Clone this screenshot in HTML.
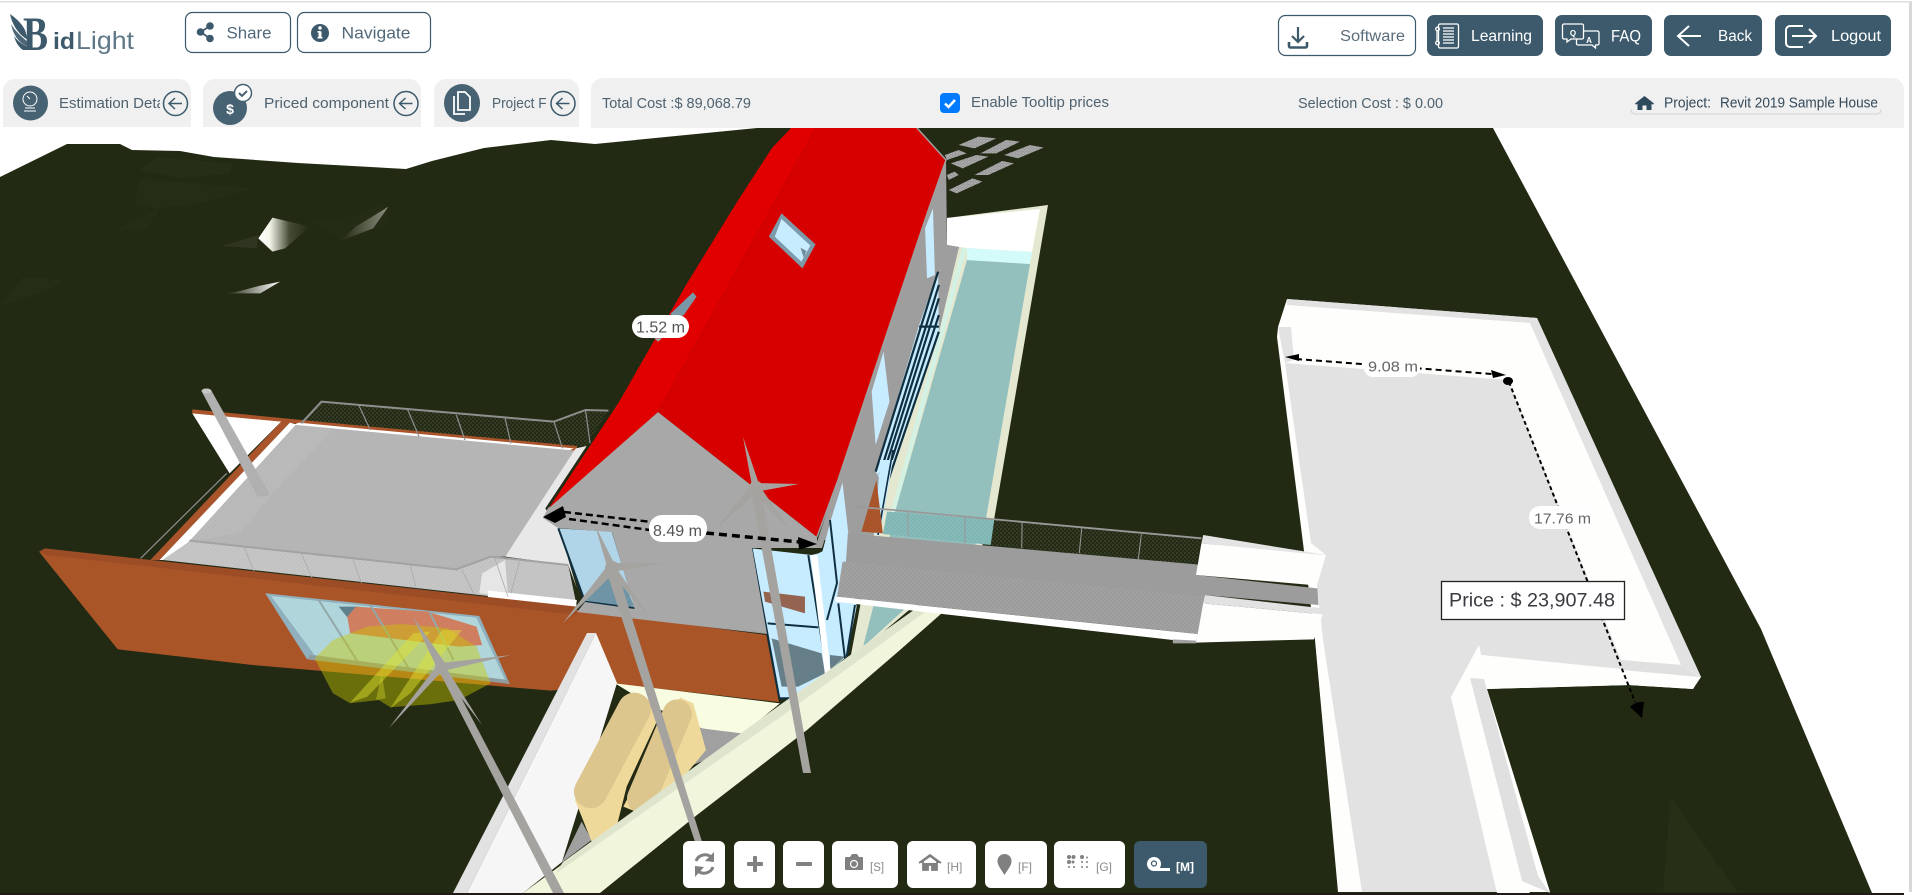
<!DOCTYPE html>
<html><head><meta charset="utf-8"><title>BidLight</title>
<style>
html,body{margin:0;padding:0;background:#fff;overflow:hidden}
svg{display:block;position:absolute;left:0;top:0}
text{font-family:"Liberation Sans",sans-serif}
</style></head><body>
<svg width="1912" height="895" viewBox="0 0 1912 895" xmlns="http://www.w3.org/2000/svg">
<defs>
<clipPath id="view"><rect x="0" y="128" width="1904" height="765"/></clipPath>
<clipPath id="t1"><rect x="50" y="85" width="110" height="35"/></clipPath>
<clipPath id="t3"><rect x="485" y="85" width="62" height="35"/></clipPath>
<pattern id="dd5" width="4" height="4" patternUnits="userSpaceOnUse" patternTransform="scale(1.74216,3.0003)"><rect width="4" height="4" fill="#232a14"/><circle cx="1" cy="1" r=".55" fill="#7d8074"/><circle cx="3" cy="3" r=".55" fill="#666a5c"/></pattern>
<pattern id="dl5" width="4" height="4" patternUnits="userSpaceOnUse" patternTransform="scale(1.74216,3.0003)"><rect width="4" height="4" fill="#b8b8b8"/><circle cx="1" cy="1" r=".55" fill="#c8c8c8"/><circle cx="3" cy="3" r=".55" fill="#c4c4c4"/></pattern>
<pattern id="df5" width="4" height="4" patternUnits="userSpaceOnUse" patternTransform="scale(1.74216,3.0003)"><rect width="4" height="4" fill="#c2c2c2"/><circle cx="1" cy="1" r=".55" fill="#d4d4d4"/><circle cx="3" cy="3" r=".55" fill="#d0d0d0"/></pattern>
<pattern id="dd8" width="4" height="4" patternUnits="userSpaceOnUse" patternTransform="scale(2.80034,3.0003)"><rect width="4" height="4" fill="#232a14"/><circle cx="1" cy="1" r=".55" fill="#7d8074"/><circle cx="3" cy="3" r=".55" fill="#666a5c"/></pattern>
<pattern id="dg8" width="4" height="4" patternUnits="userSpaceOnUse" patternTransform="scale(2.80034,3.0003)"><rect width="4" height="4" fill="#9c9c9c"/><circle cx="1" cy="1" r=".55" fill="#b8b8b8"/><circle cx="3" cy="3" r=".55" fill="#b2b2b2"/></pattern>
<pattern id="dp8" width="4" height="4" patternUnits="userSpaceOnUse" patternTransform="scale(2.80034,3.0003)"><rect width="4" height="4" fill="#7fb5b3"/><circle cx="1" cy="1" r=".55" fill="#a4cdca"/><circle cx="3" cy="3" r=".55" fill="#a4cdca"/></pattern>
<pattern id="ds6" width="3" height="3" patternUnits="userSpaceOnUse" patternTransform="scale(2.52908,3.0003)"><rect width="3" height="3" fill="#979797"/><circle cx="1" cy="1" r=".65" fill="#cfcfcf"/><circle cx="2.500" cy="2.300" r=".45" fill="#bdbdbd"/></pattern>
<linearGradient id="spec" x1="0" y1="0" x2="1" y2="0"><stop offset="0" stop-color="#fff"/><stop offset=".22" stop-color="#f4f5ea"/><stop offset=".6" stop-color="#454b35"/><stop offset="1" stop-color="#232a14"/></linearGradient>
<linearGradient id="spec2" x1="1" y1="0" x2="0" y2="0"><stop offset="0" stop-color="#8a8d7e"/><stop offset="1" stop-color="#232a14"/></linearGradient>
<linearGradient id="spec3" x1="1" y1="0" x2="0" y2="0"><stop offset="0" stop-color="#fff"/><stop offset="1" stop-color="#232a14"/></linearGradient>
</defs>
<rect width="1912" height="895" fill="#fff"/>
<rect x="0" y="1" width="1912" height="1.5" fill="#dedede"/>

<g clip-path="url(#view)">
<!-- terrain -->
<polygon fill="#232a14" points="0,177 67,144 120,144 132,150 180,151 214,157 298,163 406,169 432,161 484,148 551,140 595,144 757,128 1493,128 1761,629 1872,893 0,893"/>
<g transform="translate(0,120) scale(.3827,.3333)">
<polygon fill="#272e17" points="365,150 410,112 610,130 600,160 470,175"/>
<polygon fill="#262d16" points="370,175 660,205 520,250 420,265 300,330 385,325 415,270 350,250"/>
<polygon fill="#262d16" points="0,560 60,470 160,480 130,510"/>
<polygon fill="#252c15" points="810,300 920,290 1010,250 1015,310 900,365"/>
<polygon fill="url(#spec)" points="675,355 712,293 810,320 745,385 712,395"/>
<polygon fill="url(#spec2)" points="890,362 975,325 1015,260 930,320"/>
<polygon fill="url(#spec3)" points="590,520 680,520 732,485 680,497 620,515"/>
<polygon fill="#2f3520" points="580,378 675,345 670,385"/>
</g>
<g transform="translate(1300,120) scale(.3903,.4943)"><polygon fill="#272f16" points="950,1370 1120,1562 930,1562"/></g>

<!-- solar panels -->
<g transform="translate(500,125) scale(.3954,.3333)" fill="url(#ds6)">
<polygon points="1160,60 1210,35 1255,40 1200,70"/><polygon points="1215,85 1280,45 1315,50 1255,85"/><polygon points="1275,90 1340,60 1375,68 1310,100"/><polygon points="1125,90 1160,75 1180,85 1130,105"/><polygon points="1140,115 1205,90 1235,95 1170,130"/><polygon points="1200,150 1270,108 1300,115 1235,150"/><polygon points="1135,195 1195,160 1220,170 1155,205"/><polygon points="1130,150 1150,140 1160,150 1135,165"/>
</g>

<!-- pool -->
<polygon fill="#e4e8d0" points="947,218 1048,205 994,520 980,550 850,660 880,500 959,247 947,245"/>
<polygon fill="#fff" points="947,218 1040,209 1032,252 967,248 959,247 947,245"/>
<polygon fill="#93bfbd" points="967,260 1030,264 984,530 975,545 863,647 880,580 895,512"/>
<polygon fill="#d2fbfa" points="967,248 1032,252 1030,264 967,260"/>
<polygon fill="#d4f2e4" points="962,248 967,248 895,512 891,512"/>

<!-- left deck -->
<g transform="translate(0,380) scale(.574,.3333)">
<polygon fill="#a9542a" points="335,88 1005,200 1005,215 335,100"/>
<polygon fill="#fff" points="335,100 490,125 400,280"/>
<polygon fill="url(#dd5)" points="560,65 965,125 1020,90 1060,92 1020,200 525,130"/>
<polygon fill="#a9542a" points="525,120 1005,198 1005,215 525,138"/>
<polygon fill="#fff" points="520,128 1000,205 985,216 510,136"/>
<polygon fill="#a9542a" points="490,125 505,128 278,540 262,540"/>
<polygon fill="#fff" points="505,128 520,135 300,540 278,540"/>
<polygon fill="#b5b5b5" points="515,135 1003,212 880,530 855,530 795,568 330,482 300,540"/>
<polygon fill="url(#dl5)" points="515,135 580,145 470,350 420,455 340,485 300,540"/>
<polygon fill="#e8e8e8" points="1003,205 1022,198 950,385 975,450 1005,625 990,555 880,530"/>
<polygon fill="url(#df5)" points="283,540 330,484 795,568 855,530 990,555 1005,680 835,645"/>
<polygon fill="#e6e6e6" points="840,580 880,540 885,650 835,640"/>
<polygon fill="#fff" points="850,632 1005,660 1003,682 850,652"/>
<g fill="none" stroke="#8f8f8f">
<polyline stroke-width="2" vector-effect="non-scaling-stroke" points="525,130 560,65 965,125 1020,90 1060,92"/>
<path stroke-width="1.200" vector-effect="non-scaling-stroke" d="M625,75L645,150M710,88L730,170M795,105L810,180M880,115L890,190M965,125L980,205M1020,90L1028,190M245,535L395,280"/>
<polyline stroke-width="2" vector-effect="non-scaling-stroke" points="330,482 795,568 855,530 990,555" stroke="#a2a2a2"/>
<path stroke-width=".8" stroke="#aaa" vector-effect="non-scaling-stroke" d="M425,500L445,585M525,520L545,600M615,540L630,610M715,555L725,625M805,570L825,640M862,535L885,650M905,545L890,640"/>
</g>
<!-- brown wall -->
<polygon fill="#aa5528" points="68,515 1005,690 1335,765 1357,966 1075,912 960,932 905,924 440,855 205,808"/>
<polygon fill="#9d4d26" points="68,515 78,505 1005,680 1005,705 80,525"/>
<polygon fill="#8fb0bc" points="462,640 835,708 888,912 535,838"/>
<polygon fill="#b0d6dc" points="472,648 830,713 880,900 548,825"/>
<polygon fill="#5f7f8c" points="590,680 625,680 605,712"/>
<polygon fill="#cf7e5f" points="620,680 745,695 830,740 840,795 800,800 610,760 605,710"/>
<g stroke="#93a8a8" stroke-width="2"><path vector-effect="non-scaling-stroke" d="M555,660L625,850M645,675L712,865M748,695L790,840"/></g>
<polygon fill="#8e9ca0" points="540,825 885,900 888,912 535,838"/>
<!-- yellow -->
<polygon fill="#c8c800" fill-opacity=".44" points="548,835 580,780 640,740 700,732 780,745 830,800 855,910 800,960 750,973 680,982 660,960 610,970 580,940"/>
<polygon fill="#e0e430" fill-opacity=".45" points="610,968 720,760 750,755 640,950"/>
<polygon fill="#e0e430" fill-opacity=".45" points="680,985 770,750 805,750 715,940"/>
<polygon fill="#e0e430" fill-opacity=".35" points="655,960 665,880 672,955"/>
</g>

<!-- right house wall -->
<polygon fill="#9e9e9e" points="946,160 947,245 959,247 939,332 885,490 872,540 818,540 884,342 929,208"/>
<polygon fill="#9e9e9e" points="844,480 876,480 862,540 850,540"/>
<g transform="translate(500,125) scale(.3954,.3333)">
<polygon fill="#c8ecff" points="1075,310 1095,250 1100,450 1080,460"/>
<polygon fill="#c8ecff" points="940,800 970,680 985,830 950,960"/>
<polygon fill="#c8ecff" points="1108,440 1110,620 975,1090 950,1040 1060,600"/>
<g stroke="#0f2f40" stroke-width="2.200" fill="none"><path vector-effect="non-scaling-stroke" d="M1108,440L950,1040M1110,480L960,1050M1110,520L965,1065M1110,570L970,1080M1110,620L975,1090M1060,605H1110"/></g>
</g>
<polygon fill="#c8ecff" points="880,460 893,460 880,535 875,535"/>
<path d="M893,450L878,535" stroke="#0f2f40" stroke-width="1.600" fill="none"/>

<!-- house front -->
<g transform="translate(540,480) scale(.3333)">
<polygon fill="#c8ecff" points="835,220 895,190 905,0 925,200 950,380 920,530 870,570 800,620 750,655 718,655 635,205 815,225"/>
<polygon fill="#667e88" points="695,475 845,520 855,580 775,620 725,620"/>
<polygon fill="#667e88" points="870,525 915,530 870,570"/>
<polygon fill="#946450" points="670,335 795,350 795,400 675,365"/>
<g fill="none" stroke="#0f2f40" stroke-width="6"><path d="M635,205L718,655H750"/><path d="M683,430L835,442"/><path d="M805,225L860,575"/><path d="M895,370L915,535M945,375L920,530"/></g>
<polygon fill="#fff" points="812,225 832,225 872,572 855,582"/>
<!-- left window -->
<polygon fill="#b0d4e8" points="55,145 215,155 285,385 135,365"/>
<polygon fill="#6e94a6" points="130,360 190,280 250,300 285,385"/>
<path d="M55,145L135,365L285,385" fill="none" stroke="#0f2f40" stroke-width="6"/>
</g>
<polygon fill="#a8a8a8" points="658,412 817,537 817,548 752,548 767,634 635,610 612,532 558,528 543,518 548,508"/>
<polygon fill="#a8a8a8" points="577,612 585,602 635,609 767,634"/>
<!-- glass sliver right of the roof tip -->
<polygon fill="#c8ecff" points="842,478 850,548 822,553"/>
<polygon fill="#a0a0a0" points="838,478 844,478 822,548 815,548"/>
<path d="M830,520L837,583L827,620" fill="none" stroke="#0f2f40" stroke-width="2"/>

<!-- roof -->
<polygon fill="#e00000" points="791,128 772,148 737,202 686,285 619,402 549,508 658,412 816,128"/>
<polygon fill="#d60000" points="816,128 917,128 946,160 929,208 884,342 838,480 817,537 658,412"/>
<path d="M917,128L946,160L929,208L884,342L838,480L817,537" fill="none" stroke="#a0a0a0" stroke-width="1.500"/>
<g transform="translate(500,125) scale(.3954,.3333)">
<polygon fill="#7c9aaa" points="712,265 798,358 765,430 680,335"/>
<polygon fill="#c8ecff" points="712,282 785,362 762,410 695,335"/>
<polygon fill="#6f8c9a" points="760,368 775,378 768,398"/>
<polygon fill="#7898a8" points="432,565 488,502 497,515 465,570 430,590"/>
<polygon fill="#9aa" points="390,640 410,640 400,650"/>
</g>

<!-- pale floor, white wall, tanks, band -->
<polygon fill="#e2e2e2" points="587,633 596,633 467,893 453,893"/>
<polygon fill="#f6f6f6" points="596,633 617,683 562,862 523,893 467,893"/>
<g transform="translate(440,640) scale(.3333)">
<polygon fill="#f8fde2" points="525,130 1020,190 905,285 785,265 640,200"/>
<polygon fill="#a0a0a0" points="700,250 785,265 905,280 795,360 700,400"/>
<polygon fill="#a0a0a0" points="425,545 365,668 455,600"/>
<polygon fill="#efd99a" points="720,172 760,190 798,330 740,400 680,445 600,520 550,500"/>
<path d="M712,222L605,475" fill="none" stroke-linecap="round" stroke="#dcc68e" stroke-width="88"/>
<polygon fill="#efd99a" points="590,158 640,190 655,235 560,440 530,560 455,605 405,480"/>
<path d="M583,208L452,455" fill="none" stroke-linecap="round" stroke="#dcc68e" stroke-width="100"/>
</g>
<polygon fill="#f1f5dc" points="914,610 780,705 523,893 600,893 697,815 807,730 900,650 942,613"/>
<polygon fill="#dfe5cd" points="914,610 780,705 563,862 555,874 782,716 925,612"/>

<!-- right slab -->
<polygon fill="#fefefc" points="1287,299 1537,318 1701,677 1693,689 1629,685 1487,689 1550,892 1338,892 1315,640 1303,543 1277,337 1278,327"/>
<polygon fill="#e2e2e2" points="1285,363 1508,380 1621,660 1681,665 1700,677 1481,655 1479,645 1451,697 1497,892 1362,892 1323,640 1317,585 1326,555 1311,543"/>
<polygon fill="#fefefc" points="1479,645 1481,655 1700,677 1693,689 1629,685 1487,689 1470,678 1451,697"/>
<polygon fill="#e2e2e2" points="1287,299 1537,318 1530,323 1287,305"/>
<polygon fill="#e2e2e2" points="1537,318 1701,677 1681,665 1530,323"/>
<polygon fill="#e2e2e2" points="1278,327 1291,327 1294,360 1285,363"/>
<polygon fill="#e0e0e0" points="1621,660 1681,665 1700,677 1622,670"/>
<polygon fill="#e0e0e0" points="1470,678 1484,679 1538,876 1550,893 1522,881"/>
<polygon fill="#fefefc" points="1451,697 1470,678 1522,881 1530,893 1497,893"/>

<!-- bridge -->
<g transform="translate(780,480) scale(.3571,.3333)">
<polygon fill="#a9542a" points="270,0 288,160 228,155"/>
<polygon fill="url(#dd8)" points="590,120 1180,175 1165,258 590,195"/>
<polygon fill="url(#dp8)" points="300,95 600,120 590,195 288,162"/>
<polygon fill="#9c9c9c" points="190,160 1185,255 1165,285 1505,325 1508,375 1190,345 1170,462 160,350 185,240"/>
<polygon fill="url(#dg8)" points="175,245 1190,350 1170,460 160,350"/>
<polygon fill="#fff" points="155,350 1170,462 1165,488 455,402 155,365"/>
<polygon fill="#a0a0a0" points="1100,478 1165,482 1165,490 1100,490"/>
<polygon fill="#e4e4e4" points="1185,165 1530,225 1520,228 1180,190"/>
<polygon fill="#fefefc" points="1180,190 1528,226 1500,316 1165,285"/>
<polygon fill="#fefefc" points="1185,370 1520,403 1495,478 1165,488 1170,460"/>
<polygon fill="#e2e2e2" points="1190,345 1520,385 1520,403 1185,370"/>
<g stroke="#999" fill="none">
<polyline stroke-width="1.800" vector-effect="non-scaling-stroke" points="215,80 1180,175"/>
<path stroke-width="1" vector-effect="non-scaling-stroke" d="M358,95V170M518,110V190M678,128L677,205M845,145L838,220M1012,163L1003,240"/>
</g>
</g>

<!-- turbines -->
<g fill="#a5a3a0">
<polygon points="437,667 445,667 564,893 553,893"/>
<polygon points="413,617 445,663 437,668"/><polygon points="511,655 441,663 443,671"/><polygon points="389,728 438,664 443,670"/><polygon points="482,725 439,669 445,666"/>
<circle cx="441" cy="667" r="6"/>
<polygon points="606,570 617,570 703,845 696,845"/>
<polygon points="595,525 615,565 608,570"/><polygon points="666,563 610,563 612,572"/><polygon points="563,623 608,565 615,572"/><polygon points="650,618 608,570 615,566"/>
<circle cx="612" cy="568" r="7"/>
<polygon points="751,490 761,490 811,773 803,773"/>
<polygon points="743,437 752,486 759,484"/><polygon points="799,484 754,483 755,492"/><polygon points="715,530 752,484 758,491"/><polygon points="790,530 752,491 759,485"/>
<circle cx="756" cy="488" r="7"/>
</g>
<polygon fill="#b0b0b0" points="202,392 211,390 270,495 258,497"/>
<ellipse cx="206.500" cy="391" rx="5" ry="2.500" fill="#c6c6c6"/>

<!-- dims -->
<g fill="none" stroke="#000">
<path d="M564,512L652,522M569,519L650,530" stroke-width="2.500" stroke-dasharray="7 4"/>
<path d="M706,533L800,542" stroke-width="3.500" stroke-dasharray="8 5"/>
<path d="M1296,359L1505,375" stroke-width="2" stroke-dasharray="6 4"/>
<path d="M1509,382L1635,702" stroke-width="2" stroke-dasharray="4 3"/>
</g>
<polygon fill="#000" points="543,517 563,506 566,517 555,523"/>
<polygon fill="#000" points="798,537 817,544 799,550"/>
<polygon fill="#000" points="1285,357 1299,354 1299,361"/>
<polygon fill="#000" points="1491,370 1506,375 1493,378"/>
<ellipse cx="1508" cy="381" rx="5" ry="4" fill="#000"/>
<path d="M1630,707Q1636,701 1644,702L1642,718z" fill="#000"/>
</g>
<rect x="0" y="893" width="1904" height="2" fill="#221a18"/>
<rect x="1909" y="2" width="3" height="890" fill="#d8d8d8"/>

<!-- labels -->
<rect x="649" y="515" width="58" height="27" rx="13" fill="#fff"/>
<text x="653" y="536" font-size="16" fill="#555" textLength="49" lengthAdjust="spacingAndGlyphs">8.49 m</text>
<rect x="632" y="315" width="57" height="23" rx="11.500" fill="#fff"/>
<text x="636" y="332.500" font-size="16" fill="#555" textLength="49" lengthAdjust="spacingAndGlyphs">1.52 m</text>
<rect x="1364" y="358" width="56" height="19" rx="9" fill="#fff"/>
<text x="1368" y="371.500" font-size="15" fill="#666" textLength="50" lengthAdjust="spacingAndGlyphs">9.08 m</text>
<rect x="1529" y="506" width="65" height="23" rx="11" fill="#fff"/>
<text x="1534" y="523.500" font-size="15" fill="#666" textLength="57" lengthAdjust="spacingAndGlyphs">17.76 m</text>
<rect x="1441.500" y="581.500" width="183" height="38" fill="#fff" stroke="#222" stroke-width="1.300"/>
<text x="1449" y="606.500" font-size="19" fill="#3a3a40" textLength="166" lengthAdjust="spacingAndGlyphs">Price : $ 23,907.48</text>

<!-- toolbar -->
<g fill="#fff">
<rect x="683" y="841" width="42" height="47" rx="6"/><rect x="734" y="841" width="41" height="47" rx="6"/><rect x="783" y="841" width="41" height="47" rx="6"/><rect x="832" y="841" width="66" height="47" rx="6"/><rect x="907" y="841" width="69" height="47" rx="6"/><rect x="985" y="841" width="62" height="47" rx="6"/><rect x="1054" y="841" width="71" height="47" rx="6"/><rect x="1134" y="841" width="73" height="47" rx="6" fill="#3c5a6b"/>
</g>
<g fill="none" stroke="#808080" stroke-width="3">
<path d="M696,861a9.500,9.500 0 0 1 16,-3"/><path d="M713,867a9.500,9.500 0 0 1 -16,3"/>
</g>
<polygon fill="#808080" points="714,852 714,862 705,861"/><polygon fill="#808080" points="695,877 695,866 704,867"/>
<rect x="747" y="862" width="16" height="4" rx="1" fill="#808080"/><rect x="753" y="856" width="4" height="16" rx="1" fill="#808080"/>
<rect x="796" y="862" width="16" height="4" rx="1" fill="#808080"/>
<path d="M846,857h4l2,-3h5l2,3h3a1,1 0 0 1 1,1v11a1,1 0 0 1 -1,1h-16a1,1 0 0 1 -1,-1v-11a1,1 0 0 1 1,-1z" fill="#808080"/><circle cx="854" cy="864" r="3.500" fill="none" stroke="#fff" stroke-width="1.200"/>
<text x="870" y="871" font-size="11.500" fill="#8a8a8a">[S]</text>
<path d="M919,863L930,855L941,863M923,861v9h5v-5h4v5h5v-9L930,856z" fill="#808080" stroke="#808080" stroke-width="1.800"/>
<text x="947" y="871" font-size="12" fill="#8a8a8a">[H]</text>
<path d="M1004.500,875C1000,868 997.500,865 997.500,861a7,7 0 0 1 14,0c0,4 -2.500,7 -7,14z" fill="#808080"/>
<text x="1018" y="871" font-size="12" fill="#8a8a8a">[F]</text>
<g fill="#808080"><circle cx="1069" cy="857" r="2"/><circle cx="1073.500" cy="857" r="2"/><circle cx="1069" cy="862" r="2"/><circle cx="1073" cy="862" r="1.500"/><circle cx="1082" cy="857" r="2"/><circle cx="1087" cy="857.500" r="1"/><circle cx="1082" cy="862" r="1"/><circle cx="1087" cy="862" r="1"/><circle cx="1069" cy="867" r="1"/><circle cx="1074" cy="867" r="1"/><circle cx="1082" cy="867" r="1"/><circle cx="1087" cy="867" r="1"/></g>
<text x="1096" y="871" font-size="12" fill="#8a8a8a">[G]</text>
<circle cx="1154" cy="864" r="7" fill="#fff"/><circle cx="1154" cy="863.500" r="2.500" fill="none" stroke="#3c5a6b" stroke-width="1.200"/><rect x="1154" y="868" width="16" height="3" fill="#fff"/>
<text x="1176" y="871" font-size="12" font-weight="bold" fill="#fff">[M]</text>

<!-- header: logo -->
<g fill="#3c5a6b">
<path d="M10,14C16,18 22,24 25,30L28,40C21,36 13,28 10,14z"/>
<path d="M11,24C15,31 22,37 28,42L29,47C21,44 14,38 11,24z" fill="#4d6777"/>
<path d="M14,36C18,42 24,45 30,48V50H23C20,48 16,44 14,36z"/>
<text x="23" y="50" font-size="48" font-weight="bold" style="font-family:'Liberation Serif',serif" textLength="25" lengthAdjust="spacingAndGlyphs">B</text>
<text x="53" y="49" font-size="23" font-weight="bold" textLength="22" lengthAdjust="spacingAndGlyphs">id</text>
<text x="76" y="49" font-size="25" fill="#5f7887" textLength="58" lengthAdjust="spacingAndGlyphs">Light</text>
</g>

<!-- share/nav -->
<g fill="#fff" stroke="#3c5a6b" stroke-width="1.200"><rect x="185.500" y="12.500" width="105" height="40" rx="7"/><rect x="297.500" y="12.500" width="133" height="40" rx="7"/><rect x="1278.500" y="15.500" width="137" height="40" rx="7"/></g>
<g fill="#3c5a6b"><circle cx="200.500" cy="32" r="3.800"/><circle cx="210" cy="26" r="3.800"/><circle cx="210" cy="38.500" r="3.800"/></g>
<path d="M200.500,32L210,26M200.500,32L210,38.500" stroke="#3c5a6b" stroke-width="1.800"/>
<text x="226.500" y="38.500" font-size="16.500" fill="#51697a" textLength="45" lengthAdjust="spacingAndGlyphs">Share</text>
<circle cx="320" cy="33" r="9" fill="#3c5a6b"/><rect x="318.500" y="31.500" width="3" height="6.500" fill="#fff"/><rect x="317.500" y="31" width="3" height="1.500" fill="#fff"/><rect x="317.500" y="37" width="5" height="1.500" fill="#fff"/><circle cx="320" cy="28" r="1.700" fill="#fff"/>
<text x="341.500" y="38.500" font-size="16.500" fill="#51697a" textLength="69" lengthAdjust="spacingAndGlyphs">Navigate</text>

<!-- right buttons -->
<g fill="none" stroke="#3c5a6b" stroke-width="2.200"><path d="M1298,27v14M1292,36l6,6l6,-6"/></g>
<path d="M1289,42v4a1.500,1.500 0 0 0 1.500,1.500h15a1.500,1.500 0 0 0 1.500,-1.500v-4" fill="none" stroke="#3c5a6b" stroke-width="2.600"/>
<text x="1340" y="41" font-size="15.500" fill="#5a6e7c" textLength="65" lengthAdjust="spacingAndGlyphs">Software</text>
<g fill="#3c5a6b"><rect x="1427" y="15" width="116" height="41" rx="7"/><rect x="1555" y="15" width="97" height="41" rx="7"/><rect x="1664" y="15" width="98" height="41" rx="7"/><rect x="1775" y="15" width="116" height="41" rx="7"/></g>
<g fill="none" stroke="#fff" stroke-width="1.300">
<rect x="1438.500" y="24" width="20" height="24" rx="1.500"/><path d="M1443,28h11M1443,31h11M1443,34h11M1443,37h11M1443,40h11M1443,43h11"/>
<circle cx="1437.500" cy="29" r="1.800"/><circle cx="1437.500" cy="43" r="1.800"/><path d="M1437,31v10"/>
<path d="M1564,24h18a1.500,1.500 0 0 1 1.500,1.500v12a1.500,1.500 0 0 1 -1.500,1.500h-11l-4,3v-3h-3a1.500,1.500 0 0 1 -1.500,-1.500v-12a1.500,1.500 0 0 1 1.500,-1.500z"/>
<path d="M1583.500,31h14a1.500,1.500 0 0 1 1.500,1.500v11a1.500,1.500 0 0 1 -1.500,1.500h-2v3l-3.500,-3h-14a1.500,1.500 0 0 1 -1.500,-1.500v-4"/>
</g>
<text x="1573" y="36" font-size="8" font-weight="bold" fill="#fff" text-anchor="middle">Q</text>
<text x="1589" y="43" font-size="8" font-weight="bold" fill="#fff" text-anchor="middle">A</text>
<text x="1471" y="41" font-size="15.500" fill="#fff" textLength="61" lengthAdjust="spacingAndGlyphs">Learning</text>
<text x="1611" y="41.500" font-size="16.500" fill="#fff" textLength="30" lengthAdjust="spacingAndGlyphs">FAQ</text>
<path d="M1701,36H1679M1689,26L1678,36L1689,46" fill="none" stroke="#fff" stroke-width="2"/>
<text x="1718" y="41" font-size="15.500" fill="#fff" textLength="34" lengthAdjust="spacingAndGlyphs">Back</text>
<path d="M1803,26h-13a4,4 0 0 0 -4,4v13a4,4 0 0 0 4,4h13M1792,36h23M1809,29l7,7l-7,7" fill="none" stroke="#fff" stroke-width="2"/>
<text x="1831" y="41" font-size="15.500" fill="#fff" textLength="50" lengthAdjust="spacingAndGlyphs">Logout</text>

<!-- tabs -->
<g fill="#f0f0f0">
<path d="M3,127V91a12,12 0 0 1 12,-12H179a12,12 0 0 1 12,12V127z"/>
<path d="M203,127V91a12,12 0 0 1 12,-12H409a12,12 0 0 1 12,12V127z"/>
<path d="M434,127V91a12,12 0 0 1 12,-12H567a12,12 0 0 1 12,12V127z"/>
<path d="M591,128V90a12,12 0 0 1 12,-12H1892a12,12 0 0 1 12,12V128z"/>
</g>
<g fill="#476272"><circle cx="30.500" cy="103" r="17.500"/><circle cx="230" cy="108" r="17"/><ellipse cx="462" cy="103" rx="18" ry="19"/></g>
<g fill="none" stroke="#fff" stroke-width="1"><circle cx="30" cy="99" r="7"/><path d="M30,99l-3,-3M25,108h10M24,111h12"/></g>
<circle cx="243" cy="93" r="8.500" fill="#fff" stroke="#476272" stroke-width="1.500"/><path d="M239,93l3,3l5,-5" fill="none" stroke="#476272" stroke-width="2"/>
<text x="230" y="114" font-size="14" font-weight="bold" fill="#fff" text-anchor="middle">$</text>
<path d="M458,92h7l5,5v13h-12z" fill="none" stroke="#fff" stroke-width="1.800"/><path d="M454,96v18h11" fill="none" stroke="#fff" stroke-width="1.800"/>

<g fill="#4e6270">
<text x="59" y="108" font-size="14.500" clip-path="url(#t1)" textLength="120" lengthAdjust="spacingAndGlyphs">Estimation Details</text>
<text x="264" y="108" font-size="14.500" textLength="125" lengthAdjust="spacingAndGlyphs">Priced component</text>
<text x="492" y="108" font-size="14.500" clip-path="url(#t3)" textLength="75" lengthAdjust="spacingAndGlyphs">Project Files</text>
<text x="602" y="108" font-size="14.500" textLength="149" lengthAdjust="spacingAndGlyphs">Total Cost :$ 89,068.79</text>
<text x="971" y="107" font-size="14.500" textLength="138" lengthAdjust="spacingAndGlyphs">Enable Tooltip prices</text>
<text x="1298" y="108" font-size="14.500" textLength="145" lengthAdjust="spacingAndGlyphs">Selection Cost : $ 0.00</text>
</g>
<g fill="none" stroke="#3c5a6b" stroke-width="1.500">
<circle cx="175.500" cy="103.500" r="12"/><path d="M182,103.500h-12M175,98l-6,5.500l6,5.500"/>
<circle cx="406" cy="103.500" r="12"/><path d="M412.500,103.500h-12M405.500,98l-6,5.500l6,5.500"/>
<circle cx="563" cy="103.500" r="12"/><path d="M569.500,103.500h-12M562.500,98l-6,5.500l6,5.500"/>
</g>
<rect x="940" y="93" width="20" height="20" rx="4" fill="#007bff"/><path d="M945,103.500l3.500,3.500l6.500,-7" fill="none" stroke="#fff" stroke-width="2.500"/>
<path d="M1631,109v1a4,4 0 0 0 4,4h242a4,4 0 0 0 4,-4v-1" fill="none" stroke="#d8d8d8" stroke-width="1.200"/>
<path d="M1635,103.500L1644.500,96L1654,103.500l-1,1.300l-1.500,-1.100V110h-5v-4.500h-4V110h-5v-6.300l-1.500,1.100z" fill="#2e4a5c"/>
<text x="1664" y="107.500" font-size="14.500" fill="#33495a" textLength="47" lengthAdjust="spacingAndGlyphs">Project:</text>
<text x="1720" y="107.500" font-size="14.500" fill="#33495a" textLength="158" lengthAdjust="spacingAndGlyphs">Revit 2019 Sample House</text>
</svg>
</body></html>
